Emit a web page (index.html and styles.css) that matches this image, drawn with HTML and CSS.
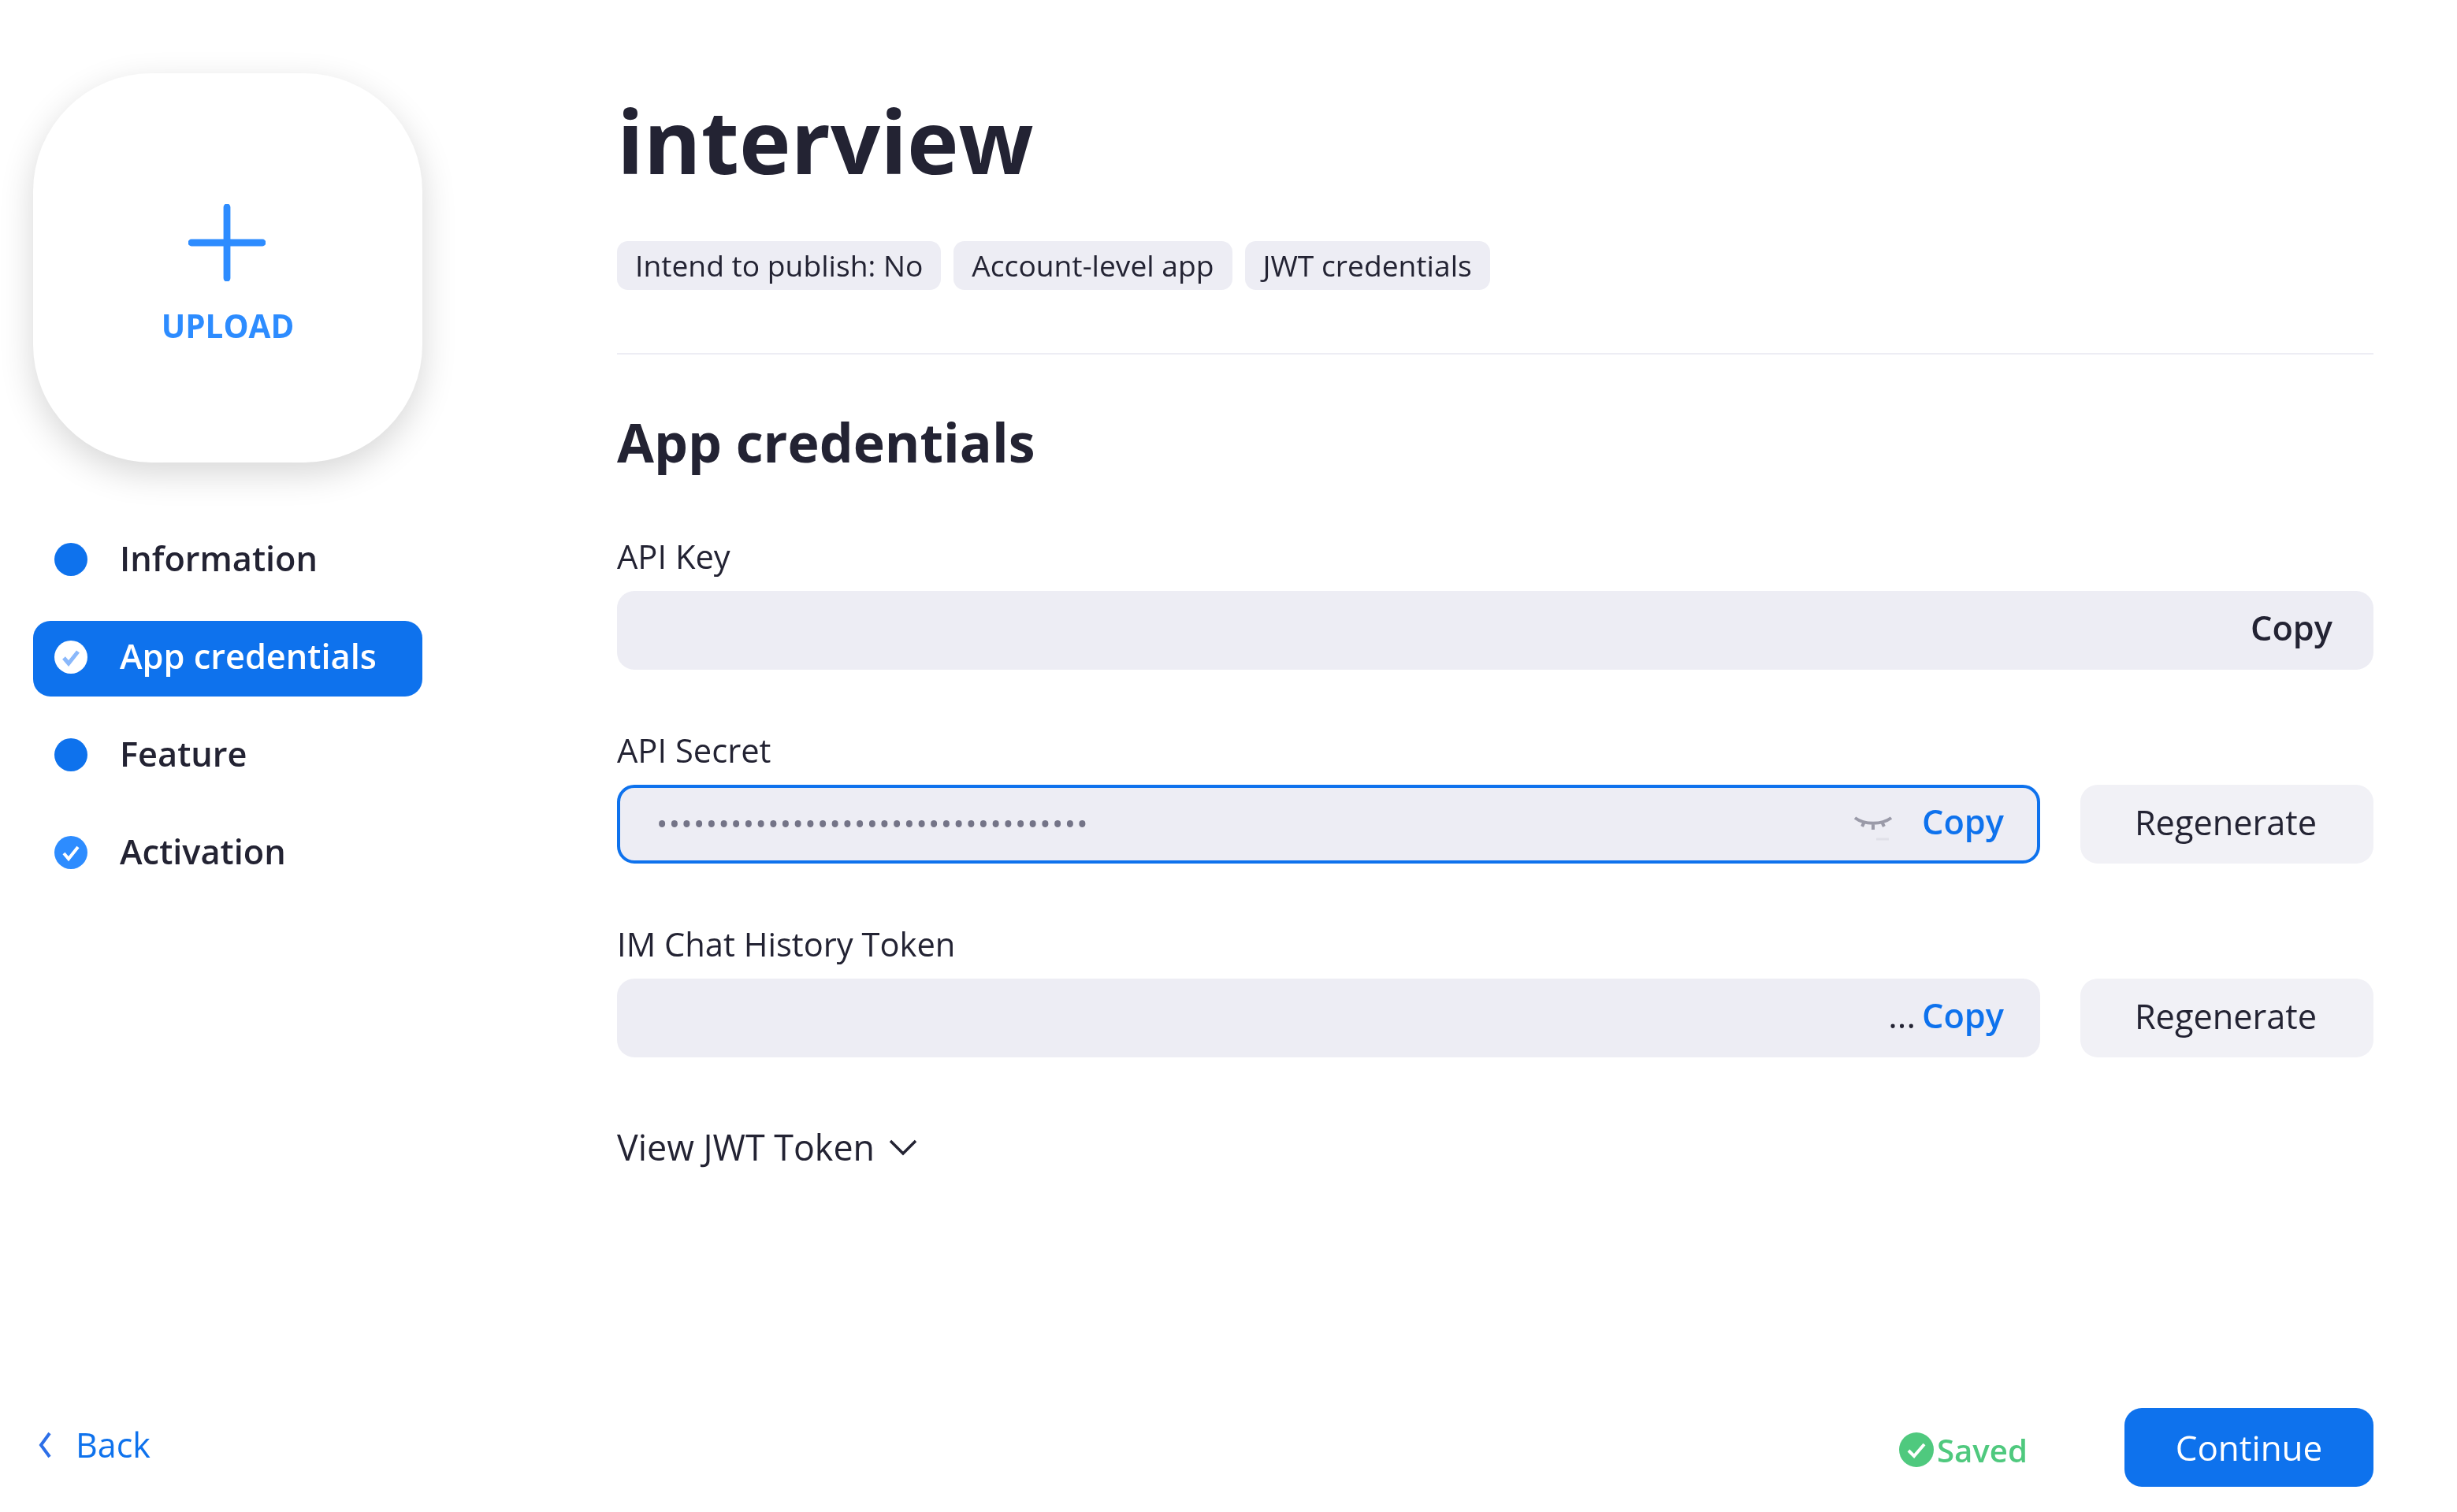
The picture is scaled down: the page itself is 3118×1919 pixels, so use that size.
FILE: index.html
```html
<!doctype html>
<html>
<head>
<meta charset="utf-8">
<title>interview</title>
<link rel="stylesheet" href="styles.css">
</head>
<body>
<div class="page">

	<aside class="side">
		<div class="upload">
			<svg class="upload-plus" viewBox="0 0 100 100"><path d="M50 4V96M4 50H96"/></svg>
			<span class="upload-text">UPLOAD</span>
		</div>
		<ul class="steps">
			<li class="step"><span class="dot"></span>Information</li>
			<li class="step active">
				<svg class="dot-check" viewBox="0 0 42 42"><circle cx="21" cy="21" r="21" fill="#fff"/><path d="M12 22l6 7 12-15" fill="none" stroke="#8ab8fb" stroke-width="5"/></svg>
				App credentials
			</li>
			<li class="step"><span class="dot"></span>Feature</li>
			<li class="step">
				<svg class="dot-check" viewBox="0 0 42 42"><circle cx="21" cy="21" r="21" fill="#2d8cff"/><path d="M12 22l6 7 12-15" fill="none" stroke="#fff" stroke-width="4"/></svg>
				Activation
			</li>
		</ul>
		<a class="back">
			<svg class="back-arrow" viewBox="0 0 18 34"><path d="M15 2L4 17l11 15"/></svg>
			Back
		</a>
	</aside>

	<main class="main">
		<h1 class="title">interview</h1>
		<div class="chips">
			<span class="chip">Intend to publish: No</span>
			<span class="chip">Account-level app</span>
			<span class="chip">JWT credentials</span>
		</div>
		<hr class="rule">
		<h2 class="section">App credentials</h2>

		<div class="group">
			<label class="label">API Key</label>
			<div class="row">
				<div class="field"><span class="copy plain">Copy</span></div>
			</div>
		</div>

		<div class="group">
			<label class="label">API Secret</label>
			<div class="row">
				<div class="field focus">
					<span class="secret">•••••••••••••••••••••••••••••••••••</span>
					<svg class="eye" viewBox="0 0 52 36"><path d="M3 6c12 9 34 9 46 0M15 11l-3 6M26 13v8M37 11l3 6" /><path class="eye-dash" d="M30 33H46"/></svg>
					<span class="copy">Copy</span>
				</div>
				<button class="regen">Regenerate</button>
			</div>
		</div>

		<div class="group">
			<label class="label">IM Chat History Token</label>
			<div class="row">
				<div class="field">
					<span class="more">...</span>
					<span class="copy tight">Copy</span>
				</div>
				<button class="regen">Regenerate</button>
			</div>
		</div>

		<div class="jwt">View JWT Token
			<svg class="jwt-arrow" viewBox="0 0 36 24"><path d="M2 4l16 16L34 4"/></svg>
		</div>

		<div class="foot">
			<span class="saved">
				<svg class="saved-icon" viewBox="0 0 44 44"><circle cx="22" cy="22" r="22" fill="#4fc97e"/><path d="M12 23l7 7 13-15" fill="none" stroke="#fff" stroke-width="4"/></svg>
				Saved
			</span>
			<button class="continue">Continue</button>
		</div>
	</main>

</div>
</body>
</html>
```

FILE: styles.css
```css
* {
	box-sizing: border-box;
}
body {
	margin: 0;
	background: #fff;
	color: #232333;
	font-family: "Open Sans", sans-serif;
}
/* the reference is a soft, upscaled capture */
.page {
	display: flex;
	height: 1919px;
	padding: 0 106px 32px 42px;
	filter: blur(.6px);
}

/* left column */
.side {
	display: flex;
	flex-direction: column;
	width: 494px;
	padding-top: 93px;
	padding-bottom: 25px;
}
.upload {
	display: flex;
	flex-direction: column;
	align-items: center;
	width: 494px;
	height: 494px;
	padding-top: 166px;
	border-radius: 150px;
	background: #fff;
	box-shadow: 0 14px 44px rgba(0, 0, 0, .16);
}
.upload-plus {
	width: 98px;
	height: 98px;
	margin-right: 3px;
	fill: none;
	stroke: #2d8cff;
	stroke-width: 9;
	stroke-linecap: round;
}
.upload-text {
	margin-top: 30px;
	font-size: 40.4px;
	line-height: 54px;
	font-weight: 700;
	color: #2d8cff;
}
.steps {
	display: flex;
	flex-direction: column;
	gap: 28px;
	list-style: none;
	margin: 77px 0 0;
	padding: 0;
}
.step {
	display: flex;
	align-items: center;
	gap: 41px;
	height: 96px;
	padding: 0 0 8px 27px;
	border-radius: 22px;
	font-size: 43.3px;
	font-weight: 600;
}
.step.active {
	background: #0e72ed;
	color: #fff;
}
.dot {
	width: 42px;
	height: 42px;
	margin-top: 4px;
	border-radius: 50%;
	background: #0e72ed;
}
.dot-check {
	width: 42px;
	height: 42px;
	margin-top: 4px;
}
.back {
	display: flex;
	align-items: center;
	gap: 30px;
	margin-top: auto;
	padding-left: 6px;
	font-size: 43px;
	line-height: 56px;
	color: #0e72ed;
}
.back-arrow {
	width: 18px;
	height: 34px;
	fill: none;
	stroke: #2d6fe8;
	stroke-width: 4;
}

/* right column */
.main {
	display: flex;
	flex-direction: column;
	flex: 1;
	margin-left: 247px;
	padding-top: 96px;
}
.title {
	margin: 0 0 46px;
	font-size: 111px;
	line-height: 164px;
	font-weight: 700;
}
.chips {
	display: flex;
	gap: 16px;
}
.chip {
	height: 62px;
	padding: 0 23px;
	border-radius: 14px;
	background: #ededf4;
	font-size: 37.2px;
	line-height: 62px;
	white-space: nowrap;
}
.rule {
	width: 100%;
	height: 2px;
	margin: 80px 0 71px;
	border: 0;
	background: #ededf4;
}
.section {
	margin: 0 0 77px;
	font-size: 68px;
	line-height: 80px;
	font-weight: 700;
}
.group {
	margin-bottom: 74px;
}
.label {
	display: block;
	margin-bottom: 16px;
	font-size: 41.7px;
	line-height: 56px;
	font-weight: 400;
}
.row {
	display: flex;
	gap: 51px;
}
.field {
	display: flex;
	align-items: center;
	justify-content: flex-end;
	flex: 1;
	height: 100px;
	padding: 0 46px 8px;
	border-radius: 22px;
	background: #ededf4;
}
.field.focus {
	border: 4px solid #0e72ed;
	padding: 0 42px 8px 46px;
}
.copy {
	font-size: 43.3px;
	font-weight: 600;
	color: #0e72ed;
}
.copy.plain {
	margin-right: 6px;
	color: #232333;
}
.copy.tight {
	margin-left: 8px;
}
.more {
	font-size: 44px;
	line-height: 44px;
}
.secret {
	margin: 6px auto 0 0;
	font-size: 38px;
	letter-spacing: 1.4px;
	color: #747487;
}
.eye {
	width: 52px;
	height: 36px;
	margin: 16px 36px 0 0;
	fill: none;
	stroke: #9a9aa8;
	stroke-width: 4;
}
.eye-dash {
	stroke: #e0e0e8;
	stroke-width: 3;
}
.regen {
	width: 372px;
	height: 100px;
	padding: 0 3px 6px 0;
	border: 0;
	border-radius: 22px;
	background: #f1f1f6;
	color: #232333;
	font-family: inherit;
	font-size: 43.3px;
}
.jwt {
	display: flex;
	align-items: center;
	gap: 18px;
	margin-top: 12px;
	font-size: 44.8px;
	line-height: 56px;
}
.jwt-arrow {
	width: 36px;
	height: 24px;
	fill: none;
	stroke: #232333;
	stroke-width: 3.5;
}
.foot {
	display: flex;
	align-items: center;
	justify-content: flex-end;
	gap: 123px;
	margin-top: auto;
}
.saved {
	display: flex;
	align-items: center;
	gap: 4px;
	margin-top: 6px;
	font-size: 40.2px;
	font-weight: 600;
	color: #4fc97e;
}
.saved-icon {
	width: 44px;
	height: 44px;
}
.continue {
	width: 316px;
	height: 100px;
	border: 0;
	border-radius: 22px;
	background: #0e72ed;
	color: #fff;
	font-family: inherit;
	font-size: 44px;
}
```
